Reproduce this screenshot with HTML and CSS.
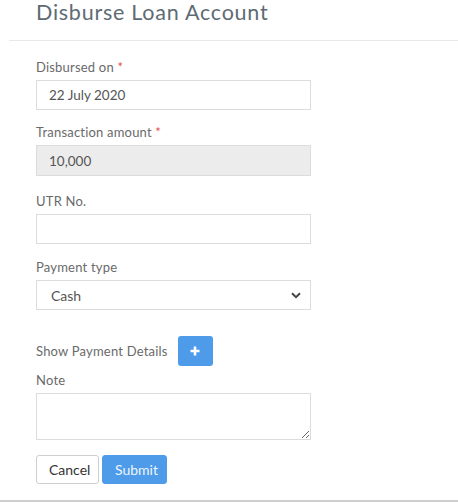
FILE: index.html
```html
<!DOCTYPE html>
<html>
<head>
<meta charset="utf-8">
<link rel="stylesheet" href="styles.css">
</head>
<body>
<div class="page">
  <div class="header">
    <h1 class="title">Disburse Loan Account</h1>
  </div>
  <form class="form">
    <div class="group group-a">
      <label class="label">Disbursed on <span class="req">*</span></label>
      <input class="control" type="text" value="22 July 2020">
    </div>
    <div class="group group-b">
      <label class="label">Transaction amount <span class="req">*</span></label>
      <input class="control control-disabled" type="text" value="10,000" disabled>
    </div>
    <div class="group group-c">
      <label class="label">UTR No.</label>
      <input class="control" type="text" value="">
    </div>
    <div class="group group-d">
      <label class="label">Payment type</label>
      <div class="select-wrap">
        <select class="control select">
          <option>Cash</option>
        </select>
        <svg class="chev" width="10" height="7" viewBox="0 0 10 7"><path d="M1 1.2 L5 5.2 L9 1.2" fill="none" stroke="#444" stroke-width="2"/></svg>
      </div>
    </div>
    <div class="details-row">
      <span class="details-label">Show Payment Details</span>
      <button type="button" class="btn-plus" aria-label="add">
        <svg width="10" height="10" viewBox="0 0 10 10"><path d="M5 0.5 V9.5 M0.5 5 H9.5" stroke="#fff" stroke-width="2.6"/></svg>
      </button>
    </div>
    <div class="group group-note">
      <label class="label">Note</label>
      <textarea class="control note"></textarea>
    </div>
    <div class="actions">
      <button type="button" class="btn btn-cancel">Cancel</button>
      <button type="button" class="btn btn-submit">Submit</button>
    </div>
  </form>
  <div class="footer-line"></div>
</div>
</body>
</html>
```
FILE: styles.css
```css
* { box-sizing: border-box; }
html, body { margin: 0; padding: 0; background: #fff; }
body { font-family: "Lato", "Noto Sans", sans-serif; color: #666; }
.page { width: 458px; height: 503px; display: flex; flex-direction: column; }
.header {
  margin-left: 9px;
  padding-left: 27px;
  height: 41px;
  border-bottom: 1px solid #e8e8e8;
}
.title {
  margin: 0;
  font-weight: 400;
  font-size: 21.5px;
  line-height: 24px;
  letter-spacing: 0.75px;
  color: #5d6b74;
}
.form { padding: 17px 0 0 36px; width: 311px; }
.group { display: flex; flex-direction: column; margin-bottom: 13px; }
.group-b { margin-bottom: 16px; }
.group-c { margin-bottom: 14px; }
.group-d { margin-bottom: 26px; }
.label { font-size: 13px; line-height: 18px; color: #6a6a6a; margin-bottom: 4px; letter-spacing: 0.2px; }
.req { color: #e0524c; }
.control {
  width: 275px;
  height: 30px;
  border: 1px solid #dcdcdc;
  border-radius: 0;
  padding: 0 12px;
  font-family: inherit;
  font-size: 13.5px;
  color: #555;
  background: #fff;
  outline: none;
}
.control-disabled { background: #ececec; height: 31px; }
.select-wrap { position: relative; width: 275px; }
.select { appearance: none; -webkit-appearance: none; padding-left: 14px; font-size: 14px; }
.chev { position: absolute; right: 10px; top: 12px; }
.details-row { display: flex; align-items: center; height: 30px; }
.details-label { font-size: 13px; color: #6a6a6a; margin-right: 10px; letter-spacing: 0.2px; }
.btn-plus {
  width: 35px; height: 30px;
  border: none; border-radius: 3px;
  background: #4d9be9;
  display: flex; align-items: center; justify-content: center;
  padding: 0;
}
.group-note { margin-top: 5px; margin-bottom: 15px; }
.note { height: 47px; resize: vertical; padding: 6px 12px; display: block; }
.actions { display: flex; gap: 3px; }
.btn {
  height: 29px;
  font-family: inherit;
  font-size: 14px;
  border-radius: 3px;
  padding: 0 12px;
}
.btn-cancel { background: #fff; border: 1px solid #cfcfcf; color: #333; width: 63px; }
.btn-submit { background: #4d9be9; border: 1px solid #4d9be9; color: #eef5fd; width: 65px; }
.footer-line { margin-top: auto; height: 2px; background: #cfcfcf; margin-bottom: 1px; }
```
